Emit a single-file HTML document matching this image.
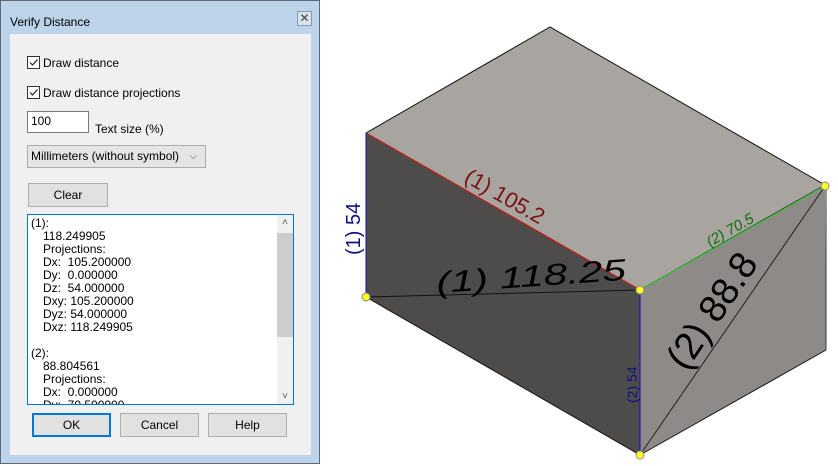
<!DOCTYPE html>
<html><head><style>
body{margin:0;width:838px;height:466px;background:#fff;position:relative;overflow:hidden;font-family:"Liberation Sans",sans-serif;font-size:12px;color:#000}
.abs{position:absolute}
.btn{position:absolute;background:#e1e1e1;border:1px solid #adadad;text-align:center;line-height:22px;font-size:12px}
.cb{position:absolute;width:11px;height:11px;border:1px solid #333;background:#fff}
.i{padding-left:12px}
</style></head><body>
<div class="abs" style="left:0;top:0;width:318px;height:462px;background:#bcd3ea;border:1px solid #5c6a7a"></div>
<div class="abs" style="left:10px;top:15px;font-size:12px">Verify Distance</div>
<div class="abs" style="left:297px;top:11px;width:13px;height:13px;border:1px solid #8a9aaa;background:#d6e2ee;font-size:12px;line-height:12px;text-align:center;color:#444">✕</div>
<div class="abs" style="left:10px;top:34px;width:301px;height:421px;background:#f0f0f0"></div>
<div class="cb" style="left:27px;top:56px"><svg width="11" height="11"><path d="M2 5.5 L4.5 8 L9.5 2.5" stroke="#222" fill="none" stroke-width="1.2"/></svg></div>
<div class="abs" style="left:43px;top:56px">Draw distance</div>
<div class="cb" style="left:27px;top:86px"><svg width="11" height="11"><path d="M2 5.5 L4.5 8 L9.5 2.5" stroke="#222" fill="none" stroke-width="1.2"/></svg></div>
<div class="abs" style="left:43px;top:86px">Draw distance projections</div>
<div class="abs" style="left:27px;top:111px;width:57px;height:20px;border:1px solid #7a7a7a;background:#fff;padding-left:3px;line-height:18px">100</div>
<div class="abs" style="left:95px;top:122px">Text size (%)</div>
<div class="abs" style="left:27px;top:145px;width:174px;height:21px;border:1px solid #acacac;background:#e5e5e5;line-height:21px;padding-left:3px">Millimeters (without symbol)<span style="position:absolute;right:8px;top:0;color:#555;font-size:10px">⌵</span></div>
<div class="btn" style="left:28px;top:183px;width:78px;height:22px">Clear</div>
<div class="abs" style="left:27px;top:214px;width:265px;height:189px;border:1px solid #0078d7;background:#fff;overflow:hidden">
<div style="position:absolute;right:0;top:0;width:16px;height:189px;background:#f0f0f0"><div style="position:absolute;top:18px;left:0;width:16px;height:104px;background:#cdcdcd"></div><div style="position:absolute;top:2px;width:16px;text-align:center;font-size:10px;color:#555">˄</div><div style="position:absolute;bottom:2px;width:16px;text-align:center;font-size:10px;color:#555">˅</div></div>
<div style="position:absolute;left:3px;top:2px;line-height:13px;white-space:pre">(1):
<span class="i">118.249905</span>
<span class="i">Projections:</span>
<span class="i">Dx:  105.200000</span>
<span class="i">Dy:  0.000000</span>
<span class="i">Dz:  54.000000</span>
<span class="i">Dxy: 105.200000</span>
<span class="i">Dyz: 54.000000</span>
<span class="i">Dxz: 118.249905</span>

(2):
<span class="i">88.804561</span>
<span class="i">Projections:</span>
<span class="i">Dx:  0.000000</span>
<span class="i">Dy:  70.500000</span></div></div>
<div class="btn" style="left:32px;top:413px;width:75px;height:20px;border:2px solid #0078d7;line-height:20px">OK</div>
<div class="btn" style="left:120px;top:413px;width:77px;height:22px">Cancel</div>
<div class="btn" style="left:208px;top:413px;width:77px;height:22px">Help</div>

<svg class="abs" style="left:0;top:0" width="838" height="466">
<polygon points="366,133 550,27 825,185 640,290" fill="#a8a4a0" stroke="#111" stroke-width="1"/>
<polygon points="366,133 640,290 640,455 366,297" fill="#4d4c4b"/>
<polygon points="640,290 825,185 826,350 640,455" fill="#8e8a87"/>
<line x1="366" y1="297" x2="640" y2="455" stroke="#111"/>
<line x1="640" y1="455" x2="826" y2="350" stroke="#111"/>
<line x1="826" y1="185" x2="826" y2="350" stroke="#333"/>
<line x1="366" y1="133" x2="640" y2="290" stroke="#e01010"/>
<line x1="640" y1="290" x2="825" y2="186" stroke="#20d020"/>
<line x1="366" y1="133" x2="366" y2="297" stroke="#1010c0"/>
<line x1="640" y1="290" x2="640" y2="455" stroke="#1010c0"/>
<line x1="366" y1="297" x2="640" y2="290" stroke="#111"/>
<line x1="640" y1="455" x2="825" y2="186" stroke="#222"/>
<text x="463" y="181" transform="rotate(29.8 463 181)" font-family="Liberation Sans" font-size="22" fill="#7a1010">(1) 105.2</text>
<text x="710" y="247" transform="rotate(-29.5 710 247)" font-family="Liberation Sans" font-size="15" font-style="italic" fill="#107010">(2) 70.5</text>
<text x="437" y="293" transform="rotate(-4 437 293)" font-family="Liberation Sans" font-size="30" font-style="italic" fill="#000" textLength="190" lengthAdjust="spacingAndGlyphs">(1) 118.25</text>
<text x="686" y="372" transform="rotate(-56 686 372)" font-family="Liberation Sans" font-size="38" fill="#000">(2) 88.8</text>
<text x="360" y="255" transform="rotate(-90 360 255)" font-family="Liberation Sans" font-size="20" fill="#101080">(1) 54</text>
<text x="637" y="403" transform="rotate(-90 637 403)" font-family="Liberation Sans" font-size="14" fill="#101080">(2) 54</text>
<g fill="#ffff20" stroke="#888" stroke-width="1">
<circle cx="366" cy="297" r="4"/><circle cx="640" cy="290" r="4"/><circle cx="825" cy="186" r="4"/><circle cx="640" cy="455" r="4"/></g>
</svg>
</body></html>
